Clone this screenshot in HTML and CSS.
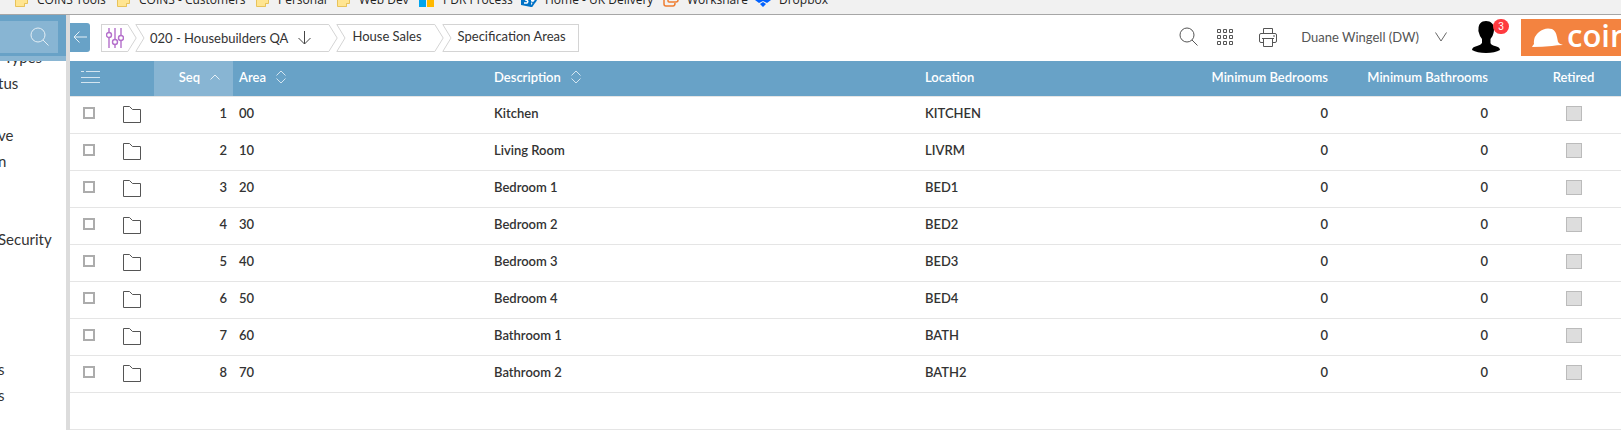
FILE: index.html
```html
<!DOCTYPE html>
<html lang="en">
<head>
<meta charset="utf-8">
<title>Specification Areas</title>
<link rel="stylesheet" href="styles.css">
</head>
<body>
<svg width="0" height="0" class="defs" aria-hidden="true">
  <symbol id="bm-folder" viewBox="0 0 13 14"><path d="M.5 0H12.500V10.500H9.500V13.500H.5Z" fill="#ffe591" stroke="#e8c35a"/><path d="M9.500 13.500V10.500" stroke="#e8c35a"/></symbol>
  <symbol id="search" viewBox="0 0 20 20"><circle cx="8" cy="8" r="7" fill="none" stroke="currentColor"/><path d="M13 13L18.500 18.500" fill="none" stroke="currentColor"/></symbol>
  <symbol id="folder" viewBox="0 0 18 17"><path d="M.5 .5H6.500L9.500 3.500H17.500V16.500H.5Z" fill="#fff" stroke="#555"/></symbol>
  <symbol id="sorter" viewBox="0 0 10 14"><path d="M.5 5.500L5 1L9.500 5.500M.5 8.500L5 13L9.500 8.500" fill="none" stroke="#d4e5f0"/></symbol>
  <symbol id="notch" viewBox="0 0 10 28"><path d="M10 .5H.8L9 14L.8 27.500H10" fill="none" stroke="#d4d4d4"/></symbol>
  <symbol id="tip" viewBox="0 0 10 28"><path d="M0 .5H.8L9.200 14L.8 27.500H0" fill="none" stroke="#d4d4d4"/></symbol>
</svg>
<div class="page">
  <nav class="bookmarks" aria-label="Bookmarks">
    <a class="bm bm-1" href="#"><svg width="13" height="14"><use href="#bm-folder"/></svg>COINS Tools</a>
    <a class="bm bm-2" href="#"><svg width="13" height="14"><use href="#bm-folder"/></svg>COINS - Customers</a>
    <a class="bm bm-3" href="#"><svg width="13" height="14"><use href="#bm-folder"/></svg>Personal</a>
    <a class="bm bm-4" href="#"><svg width="13" height="14"><use href="#bm-folder"/></svg>Web Dev</a>
    <a class="bm bm-5" href="#"><svg width="16" height="14" viewBox="0 0 16 14"><path d="M0 0H7V6H0Z" fill="#f25022"/><path d="M8 0H15V6H8Z" fill="#7fba00"/><path d="M0 6H7V14H0Z" fill="#00a4ef"/><path d="M8 6H15V14H8Z" fill="#ffb900"/></svg>PDR Process</a>
    <a class="bm bm-6" href="#"><svg width="16" height="14" viewBox="0 0 16 14"><circle cx="12" cy="6" r="3.500" fill="#fff" stroke="#0072c6"/><path d="M10 14L15 7" stroke="#0072c6" stroke-width="2"/><path d="M0 2L10 0V14L0 12Z" fill="#0072c6"/><path d="M3 4H7L5 7Q8 8 6 10H3" fill="none" stroke="#fff" stroke-width="1.500"/></svg>Home - UK Delivery</a>
    <a class="bm bm-7" href="#"><svg width="16" height="14" viewBox="0 0 16 14"><path d="M5 0V8Q5 9 6 9H13Q15 9 15 7V0M1 4V11Q1 13 3 13H10Q12 13 12 10" fill="none" stroke="#ee7d31" stroke-width="1.500"/></svg>Workshare</a>
    <a class="bm bm-8" href="#"><svg width="16" height="14" viewBox="0 0 16 14"><path d="M0 7L4 4L8 7L12 4L16 7L12 10L8 8L4 10ZM8 9L11 11L8 14L5 11ZM0 2L4 0H12L16 2L12 4L8 2L4 4Z" fill="#0061ff"/></svg>Dropbox</a>
  </nav>
  <div class="app">
    <aside class="sidebar">
      <div class="side-head">
        <label class="side-search"><input type="search" aria-label="Search menu"><svg width="20" height="20"><use href="#search"/></svg></label>
      </div>
      <ul class="side-list">
        <li class="inset"><a href="#">Types</a></li><li><a href="#">tus</a></li><li></li><li><a href="#">ve</a></li><li><a href="#">n</a></li><li></li><li></li><li><a href="#">Security</a></li><li></li><li></li><li></li><li></li><li><a href="#">s</a></li><li><a href="#">s</a></li>
      </ul>
    </aside>
    <main class="main">
      <header class="topbar">
        <button class="back" aria-label="Back"><svg width="14" height="12" viewBox="0 0 14 12"><path d="M14 6H1M6.500 .5L1 6L6.500 11.500" fill="none" stroke="#e6f0f6"/></svg></button>
        <nav class="crumbs" aria-label="Breadcrumb">
          <a class="crumb crumb-first" href="#" aria-label="Settings"><span class="crumb-body"><svg width="18" height="20" viewBox="0 0 18 20" fill="none" stroke="#b46fcb" stroke-width="1.400"><path d="M3 0V4.500M3 9.500V20M9 0V11.500M9 16.500V20M15 0V7.500M15 12.500V20"/><circle cx="3" cy="7" r="2.500"/><circle cx="9" cy="14" r="2.500"/><circle cx="15" cy="10" r="2.500"/></svg></span><svg class="cap" width="10" height="28"><use href="#tip"/></svg></a>
          <a class="crumb crumb-co" href="#"><svg class="cap" width="10" height="28"><use href="#notch"/></svg><span class="crumb-body">020 - Housebuilders QA<svg width="13" height="14" viewBox="0 0 13 14"><path d="M6.500 0V13M.5 7L6.500 13L12.500 7" fill="none" stroke="#444"/></svg></span><svg class="cap" width="10" height="28"><use href="#tip"/></svg></a>
          <a class="crumb" href="#"><svg class="cap" width="10" height="28"><use href="#notch"/></svg><span class="crumb-body">House Sales</span><svg class="cap" width="10" height="28"><use href="#tip"/></svg></a>
          <a class="crumb crumb-last" href="#"><svg class="cap" width="10" height="28"><use href="#notch"/></svg><span class="crumb-body">Specification Areas</span></a>
        </nav>
        <div class="tools">
          <button class="tool tool-search" aria-label="Search"><svg width="20" height="20"><use href="#search"/></svg></button>
          <button class="tool tool-apps" aria-label="Applications"><svg width="16" height="17" viewBox="0 0 16 17" fill="none" stroke="#555"><path d="M.5 .5h3v3h-3zM6.500 .5h3v3h-3zM12.500 .5h3v3h-3zM.5 6.500h3v3h-3zM6.500 6.500h3v3h-3zM12.500 6.500h3v3h-3zM.5 12.500h3v3h-3zM6.500 12.500h3v3h-3zM12.500 12.500h3v3h-3z"/></svg></button>
          <button class="tool tool-print" aria-label="Print"><svg width="18" height="19" viewBox="0 0 18 19" fill="none" stroke="#555"><path d="M4.500 5V.5H13.500V5M4.500 14.500H2Q.5 14.500 .5 13V7Q.5 5.500 2 5.500H16Q17.500 5.500 17.500 7V13Q17.500 14.500 16 14.500H13.500M4.500 10.500H13.500V18.500H4.500ZM3 10.500H15M14 8H16"/></svg></button>
          <button class="user">Duane Wingell (DW)<svg width="12" height="10" viewBox="0 0 12 10"><path d="M.5 .5L6 9L11.500 .5" fill="none" stroke="#666"/></svg></button>
          <div class="avatar">
            <svg width="28" height="32" viewBox="0 0 28 32"><path d="M14 0C19 0 22 3 22 8Q22 10 21.500 12Q21 15 18.500 18L18.500 22Q19 24 23 25Q28 26 28 29Q23 32 14 32Q5 32 0 29Q0 26 5 25Q9 24 10 22V18Q7.500 15 7 12Q6 10 6.500 8C6.500 3 9 0 14 0Z"/></svg>
            <span class="badge">3</span>
          </div>
          <div class="brand"><svg width="32" height="19" viewBox="0 0 32 19"><path d="M0 19Q1 17 2 16Q1 9 7 4Q13-1 20 1Q24 3 25 9L26 14Q27 16 31 17Q25 17 20 18Q10 19 0 19Z" fill="#fff"/></svg><span>coins</span></div>
        </div>
      </header>
      <table class="grid">
        <colgroup><col class="c-check"><col class="c-open"><col class="c-seq"><col class="c-area"><col class="c-desc"><col><col class="c-bed"><col class="c-bath"><col class="c-ret"></colgroup>
        <thead><tr>
          <th><svg class="menu" width="19" height="12" viewBox="0 0 19 12"><path d="M0 .5H3M5 .5H19M0 6.500H19M0 11.500H19" stroke="#d4e5f0"/></svg></th>
          <th></th>
          <th class="num sorted">Seq<svg class="up" width="10" height="6" viewBox="0 0 10 6"><path d="M.5 5.500L5 1L9.500 5.500" fill="none" stroke="#e6f0f6"/></svg></th>
          <th>Area<svg class="sort" width="10" height="14"><use href="#sorter"/></svg></th>
          <th>Description<svg class="sort" width="10" height="14"><use href="#sorter"/></svg></th>
          <th>Location</th><th class="num">Minimum Bedrooms</th><th class="num">Minimum Bathrooms</th><th class="mid">Retired</th>
        </tr></thead>
        <tbody>
          <tr><td><input class="pick" type="checkbox" aria-label="Select 1"></td><td><a class="open" href="#" aria-label="Open 1"><svg width="18" height="17"><use href="#folder"/></svg></a></td><td class="num">1</td><td>00</td><td>Kitchen</td><td>KITCHEN</td><td class="num">0</td><td class="num">0</td><td class="mid"><input class="flag" type="checkbox" disabled aria-label="Retired"></td></tr>
          <tr><td><input class="pick" type="checkbox" aria-label="Select 2"></td><td><a class="open" href="#" aria-label="Open 2"><svg width="18" height="17"><use href="#folder"/></svg></a></td><td class="num">2</td><td>10</td><td>Living Room</td><td>LIVRM</td><td class="num">0</td><td class="num">0</td><td class="mid"><input class="flag" type="checkbox" disabled aria-label="Retired"></td></tr>
          <tr><td><input class="pick" type="checkbox" aria-label="Select 3"></td><td><a class="open" href="#" aria-label="Open 3"><svg width="18" height="17"><use href="#folder"/></svg></a></td><td class="num">3</td><td>20</td><td>Bedroom 1</td><td>BED1</td><td class="num">0</td><td class="num">0</td><td class="mid"><input class="flag" type="checkbox" disabled aria-label="Retired"></td></tr>
          <tr><td><input class="pick" type="checkbox" aria-label="Select 4"></td><td><a class="open" href="#" aria-label="Open 4"><svg width="18" height="17"><use href="#folder"/></svg></a></td><td class="num">4</td><td>30</td><td>Bedroom 2</td><td>BED2</td><td class="num">0</td><td class="num">0</td><td class="mid"><input class="flag" type="checkbox" disabled aria-label="Retired"></td></tr>
          <tr><td><input class="pick" type="checkbox" aria-label="Select 5"></td><td><a class="open" href="#" aria-label="Open 5"><svg width="18" height="17"><use href="#folder"/></svg></a></td><td class="num">5</td><td>40</td><td>Bedroom 3</td><td>BED3</td><td class="num">0</td><td class="num">0</td><td class="mid"><input class="flag" type="checkbox" disabled aria-label="Retired"></td></tr>
          <tr><td><input class="pick" type="checkbox" aria-label="Select 6"></td><td><a class="open" href="#" aria-label="Open 6"><svg width="18" height="17"><use href="#folder"/></svg></a></td><td class="num">6</td><td>50</td><td>Bedroom 4</td><td>BED4</td><td class="num">0</td><td class="num">0</td><td class="mid"><input class="flag" type="checkbox" disabled aria-label="Retired"></td></tr>
          <tr><td><input class="pick" type="checkbox" aria-label="Select 7"></td><td><a class="open" href="#" aria-label="Open 7"><svg width="18" height="17"><use href="#folder"/></svg></a></td><td class="num">7</td><td>60</td><td>Bathroom 1</td><td>BATH</td><td class="num">0</td><td class="num">0</td><td class="mid"><input class="flag" type="checkbox" disabled aria-label="Retired"></td></tr>
          <tr><td><input class="pick" type="checkbox" aria-label="Select 8"></td><td><a class="open" href="#" aria-label="Open 8"><svg width="18" height="17"><use href="#folder"/></svg></a></td><td class="num">8</td><td>70</td><td>Bathroom 2</td><td>BATH2</td><td class="num">0</td><td class="num">0</td><td class="mid"><input class="flag" type="checkbox" disabled aria-label="Retired"></td></tr>
          <tr><td colspan="9"></td></tr>
        </tbody>
      </table>
    </main>
  </div>
</div>
</body>
</html>
```
FILE: styles.css
```css
* { box-sizing: border-box; }
body { margin: 0; background: #fff; color: #333; font-family: Lato, "Liberation Sans", sans-serif; font-size: 13px; }
a { color: inherit; text-decoration: none; }
svg { display: block; flex: none; }
button { padding: 0; border: 0; background: none; color: inherit; font: inherit; }
.defs { position: absolute; }
.page { display: flex; flex-direction: column; height: 100vh; overflow: hidden; }

.bookmarks { display: flex; align-items: flex-end; flex: none; height: 15px; padding-left: 15px; overflow: hidden; background: #f1f1f1; border-bottom: 1px solid #a6a6a6; }
.bm { display: flex; align-items: center; flex: none; gap: 8px; height: 28px; color: #222; font-family: "Open Sans", "Noto Sans", sans-serif; font-size: 12px; line-height: 16px; white-space: nowrap; }
.bm-1 { width: 102px; }
.bm-2 { width: 139px; }
.bm-3 { width: 81px; }
.bm-4 { width: 82px; }
.bm-5 { width: 102px; }
.bm-6 { width: 142px; }
.bm-7 { width: 92px; }
.bm-1, .bm-2, .bm-3, .bm-4 { gap: 9px; }

.app { display: flex; flex: 1; min-height: 0; }
.sidebar { display: flex; flex-direction: column; flex: none; width: 70px; overflow: hidden; border-right: 4px solid #dcdcdc; }
.side-head { z-index: 1; flex: none; width: 70px; height: 46px; padding: 6px 12px 3px 0; background: #68a2c7; border-bottom: 5px solid #8ab6d3; }
.side-search { display: flex; align-items: center; justify-content: flex-end; height: 32px; padding-right: 8px; background: #88b5d3; color: #e3eef5; }
.side-search input { flex: 1; min-width: 0; height: 30px; padding: 0; border: 0; outline: 0; background: transparent; }
.side-list { margin: -17px 0 0 -2px; padding: 0; list-style: none; font-size: 15px; line-height: 26px; }
.side-list li { height: 26px; }
.side-list .inset { padding-left: 6px; }

.main { flex: 1; min-width: 0; overflow: hidden; }
.topbar { display: flex; align-items: center; height: 46px; overflow: hidden; }
.back { display: flex; align-items: center; justify-content: center; width: 20px; height: 29px; margin-bottom: 2px; border-radius: 0 3px 3px 0; background: #68a2c7; }
.crumbs { display: flex; margin-left: 11px; }
.crumb { display: flex; margin-right: -2px; line-height: 22px; white-space: nowrap; }
.crumb-body { display: flex; gap: 10px; height: 28px; padding: 0 12px 0 6px; border: solid #d4d4d4; border-width: 1px 0; }
.crumb-first .crumb-body { align-items: center; width: 26px; padding: 0 0 0 4px; border-left-width: 1px; }
.crumb-co { line-height: 26px; }
.crumb-co .crumb-body { align-items: center; padding: 0 17px 0 5px; }
.crumb-last .crumb-body { border-right-width: 1px; }
.tools { display: flex; align-items: center; flex: none; margin-left: auto; padding-bottom: 2px; }
.tool { display: flex; color: #555; }
.tool-search { margin-right: 18px; }
.tool-apps { margin-right: 26px; }
.tool-print { margin-right: 24px; }
.user { display: flex; align-items: center; gap: 16px; margin-right: 25px; color: #555; }
.avatar { position: relative; margin-right: 21px; }
.badge { position: absolute; top: -2px; right: -9px; width: 16px; height: 15px; border-radius: 8px; background: #ff3b3f; color: #fff; font: 10px/15px "Liberation Sans", sans-serif; text-align: center; }
.brand { display: flex; align-items: center; gap: 3px; width: 100px; height: 37px; padding-left: 11px; overflow: hidden; background: #f38340; color: #fff; font: 600 31px/36px "Open Sans", sans-serif; }
.brand span { padding-bottom: 5px; }

.grid { width: 100%; table-layout: fixed; border-collapse: separate; border-spacing: 0; font-size: 13px; line-height: 16px; font-weight: 600; }
.c-check, .c-open { width: 42px; }
.c-seq { width: 79px; }
.c-area { width: 255px; }
.c-desc { width: 431px; }
.c-bed { width: 166px; }
.c-bath { width: 160px; }
.c-ret { width: 127px; }
.grid th, .grid td { padding: 0 6px 4px; text-align: left; vertical-align: middle; border-bottom: 1px solid #e5e5e5; white-space: nowrap; }
.grid th { height: 36px; background: #68a2c7; color: #fff; font-weight: 600; }
.grid td { height: 37px; }
.grid .num { text-align: right; }
.grid .mid { padding-left: 38px; text-align: center; }
.grid .sorted { padding-right: 13px; background: #88b5d3; }
.menu { margin-left: 5px; }
.sort, .up { display: inline-block; vertical-align: middle; margin: -3px 0 0 10px; }
.open { display: block; padding: 3px 0 0 5px; }
.pick, .flag { display: block; appearance: none; background: #fff; }
.pick { width: 12px; height: 12px; margin: 0 0 0 7px; border: 2px solid #acacac; }
.flag { width: 16px; height: 15px; margin: 0 auto; border: 1px solid #bbb; background: #ddd; }
```
